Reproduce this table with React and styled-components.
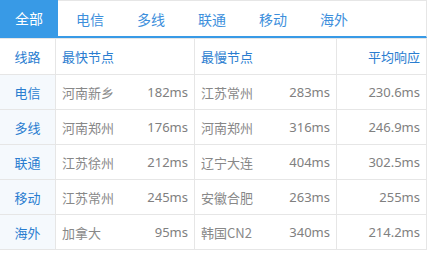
import React, { useState } from "react";
import styled, { createGlobalStyle } from "styled-components";

const Global = createGlobalStyle`
  html, body { margin: 0; padding: 0; background: #fff; }
  body { font-family: "Noto Sans", "Noto Sans CJK SC", sans-serif; }
`;

const Wrap = styled.div`
  width: 427px;
`;

const TabBar = styled.div`
  display: flex;
  gap: 3px;
  height: 35px;
  border-top: 1px solid #e6e6e6;
  border-right: 1px solid #e6e6e6;
  border-bottom: 2px solid #389ae6;
`;

const Tab = styled.div`
  box-sizing: border-box;
  width: 58px;
  height: ${(p) => (p.$active ? "36px" : "35px")};
  margin-top: ${(p) => (p.$active ? "-1px" : "0")};
  display: flex;
  align-items: center;
  justify-content: center;
  font-size: 14px;
  color: ${(p) => (p.$active ? "#fff" : "#3d8fdc")};
  background: ${(p) => (p.$active ? "#389ae6" : "transparent")};
  font-family: "Noto Sans CJK SC", sans-serif;
  cursor: pointer;
`;

const Table = styled.div`
  display: grid;
  grid-template-columns: 56px 139px 142px 90px;
  border-top: 1px solid #e6e6e6;
  font-size: 13px;
`;

const Cell = styled.div`
  box-sizing: border-box;
  height: ${(p) => (p.$head ? "36px" : "35px")};
  border-right: 1px solid #e6e6e6;
  border-bottom: 1px solid #e6e6e6;
  display: flex;
  align-items: center;
  padding: 0 6px;
  justify-content: ${(p) =>
    p.$align === "center" ? "center" : p.$align === "right" ? "flex-end" : p.$align === "between" ? "space-between" : "flex-start"};
  background: ${(p) => (p.$shade ? "#f5f9fd" : "#fff")};
  color: ${(p) => (p.$blue ? "#2a7dd0" : "#888888")};
  font-family: "Noto Sans CJK SC", sans-serif;
`;

const Num = styled.span`
  font-family: "Noto Sans", "Noto Sans CJK SC", sans-serif;
  color: #808080;
`;

const tabs = ["全部", "电信", "多线", "联通", "移动", "海外"];

const rows = [
  ["电信", "河南新乡", "182ms", "江苏常州", "283ms", "230.6ms"],
  ["多线", "河南郑州", "176ms", "河南郑州", "316ms", "246.9ms"],
  ["联通", "江苏徐州", "212ms", "辽宁大连", "404ms", "302.5ms"],
  ["移动", "江苏常州", "245ms", "安徽合肥", "263ms", "255ms"],
  ["海外", "加拿大", "95ms", "韩国CN2", "340ms", "214.2ms"],
];

export default function App() {
  const [active, setActive] = useState(0);
  return (
    <Wrap>
      <Global />
      <TabBar>
        {tabs.map((t, i) => (
          <Tab key={t} $active={i === active} onClick={() => setActive(i)}>
            {t}
          </Tab>
        ))}
      </TabBar>
      <Table>
        <Cell $head $blue $align="center">线路</Cell>
        <Cell $head $blue>最快节点</Cell>
        <Cell $head $blue>最慢节点</Cell>
        <Cell $head $blue $align="right">平均响应</Cell>
        {rows.map((r) => (
          <React.Fragment key={r[0]}>
            <Cell $shade $blue $align="center">{r[0]}</Cell>
            <Cell $align="between">
              <span>{r[1]}</span>
              <Num>{r[2]}</Num>
            </Cell>
            <Cell $align="between">
              <span>{r[3]}</span>
              <Num>{r[4]}</Num>
            </Cell>
            <Cell $align="right">
              <Num>{r[5]}</Num>
            </Cell>
          </React.Fragment>
        ))}
      </Table>
    </Wrap>
  );
}
